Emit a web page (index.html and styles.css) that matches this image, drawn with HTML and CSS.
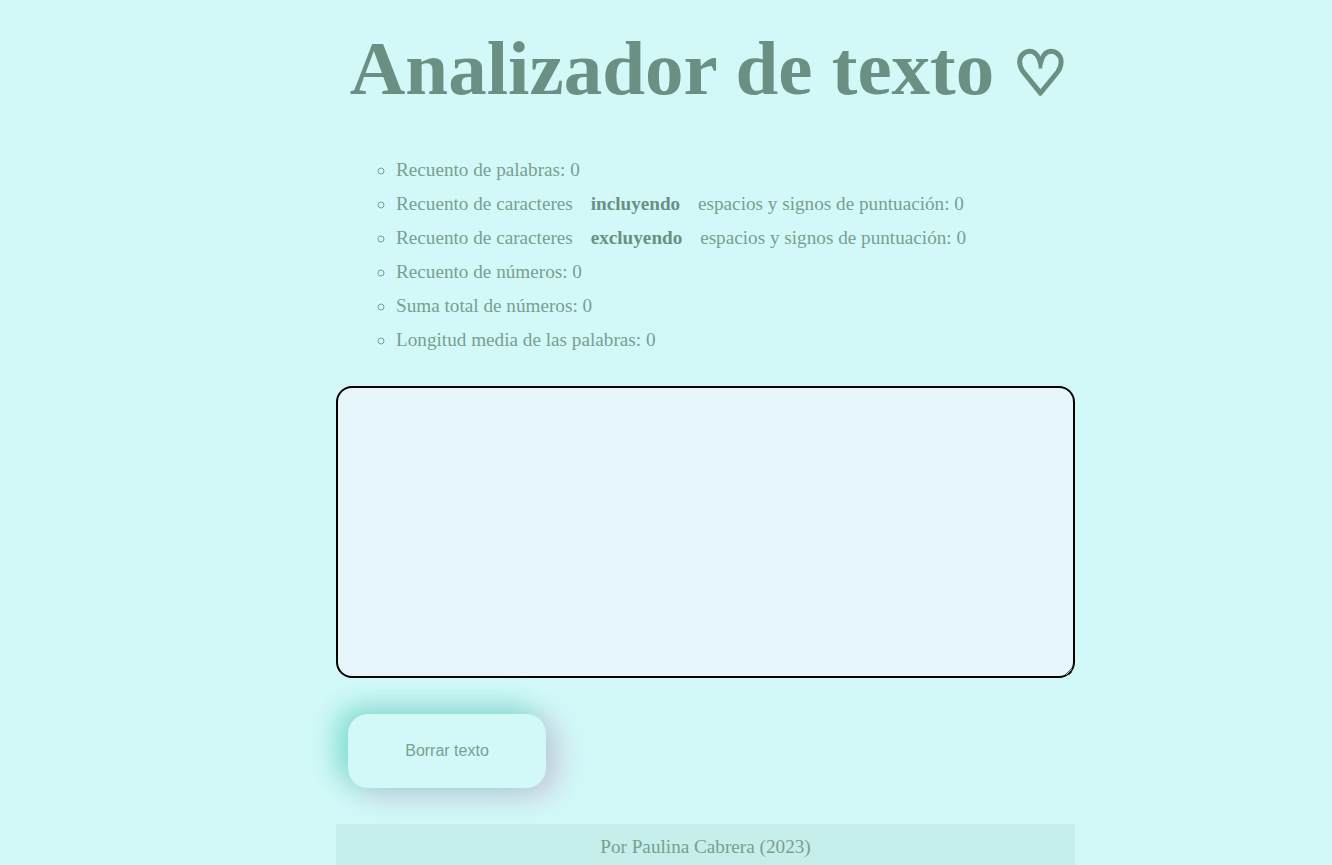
FILE: index.html
```html
<!DOCTYPE html>
<html lang="es">
<head>
<meta charset="utf-8">
<title>Analizador de texto</title>
<link rel="stylesheet" href="styles.css">
</head>
<body>
<main class="page">
  <h1 class="title">Analizador de texto <span class="heart">♡</span></h1>
  <ul class="stats">
    <li>Recuento de palabras: 0</li>
    <li>Recuento de caracteres <strong>incluyendo</strong> espacios y signos de puntuación: 0</li>
    <li>Recuento de caracteres <strong>excluyendo</strong> espacios y signos de puntuación: 0</li>
    <li>Recuento de números: 0</li>
    <li>Suma total de números: 0</li>
    <li>Longitud media de las palabras: 0</li>
  </ul>
  <textarea class="input"></textarea>
  <div class="actions">
    <button class="clear" type="button">Borrar texto</button>
  </div>
  <footer class="footer">Por Paulina Cabrera (2023)</footer>
</main>
</body>
</html>
```
FILE: styles.css
```css
html, body {
  margin: 0;
  padding: 0;
  background: #d2f9f8;
}
body {
  font-family: "Liberation Serif", "Times New Roman", serif;
  color: #7a9e90;
}
.page {
  width: 739px;
  margin-left: 336px;
  display: flex;
  flex-direction: column;
}
.title {
  margin: 22px -40px 0 -34px;
  text-align: center;
  font-size: 77px;
  line-height: 92px;
  font-weight: bold;
  white-space: nowrap;
  color: #6b9083;
}
.heart {
  font-family: "DejaVu Sans", sans-serif;
  font-weight: bold;
  font-size: 60px;
  -webkit-text-stroke: 3.5px #6b9083;
}
.stats {
  list-style: circle;
  margin: 34px 0 0 0;
  padding: 0 0 0 60px;
  font-size: 19.2px;
  line-height: 34px;
}
.stats strong {
  color: #6b9083;
  padding: 0 13px;
}
.input {
  box-sizing: border-box;
  margin-top: 29px;
  width: 739px;
  height: 292px;
  border: 2px solid #000;
  border-radius: 16px;
  background: #e6f6fa;
  resize: both;
}
.actions {
  margin-top: 36px;
  padding-left: 12px;
  display: flex;
}
.clear {
  width: 198px;
  height: 74px;
  border: none;
  border-radius: 20px;
  background: #d2f9f8;
  font-family: "Liberation Sans", Arial, sans-serif;
  font-size: 16px;
  color: #7a9e90;
  box-shadow: -10px -6px 28px rgba(120, 220, 205, 0.95), 10px 6px 30px rgba(205, 190, 218, 0.9);
}
.footer {
  margin-top: 36px;
  background: #c6eeeb;
  text-align: center;
  font-size: 19.2px;
  line-height: 22px;
  padding: 12px 0 10px;
}
```
